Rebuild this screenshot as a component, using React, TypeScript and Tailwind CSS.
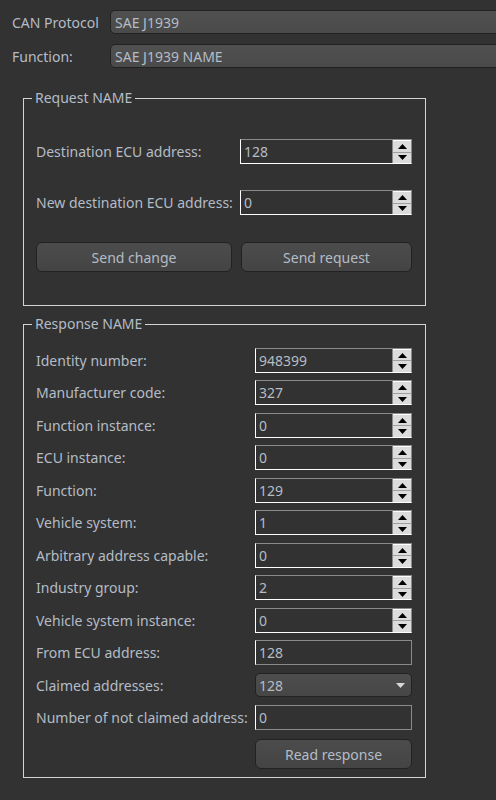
import React from 'react'

const font = { fontFamily: '"Segoe UI", "Noto Sans", "Open Sans", sans-serif' }

const SpinButtons = () => (
    <div className="flex flex-col w-[19px] h-full shrink-0 border-l border-[#8a8a8a] bg-[#dcdcdc]">
        <div className="flex-1 flex items-center justify-center border-b border-[#a0a0a0] border-t border-t-white">
            <svg width="9" height="5" viewBox="0 0 9 5"><path d="M0 5 L4.5 0 L9 5 Z" fill="#000" /></svg>
        </div>
        <div className="flex-1 flex items-center justify-center">
            <svg width="9" height="5" viewBox="0 0 9 5"><path d="M0 0 L4.5 5 L9 0 Z" fill="#000" /></svg>
        </div>
    </div>
)

const SpinBox = ({ value, width }: { value: string; width: string }) => (
    <div className={`${width} h-[25px] shrink-0 flex border-t border-r border-[#8a8a8a] border-l border-b border-l-white border-b-white bg-[#323232]`}>
        <div className="flex-1 flex items-center pl-[3px] text-[14px] text-[#b4bcc6]">{value}</div>
        <SpinButtons />
    </div>
)

const LineEdit = ({ value }: { value: string }) => (
    <div className="w-[157px] h-[25px] shrink-0 flex items-center pl-[3px] border border-[#8a8a8a] border-l-white bg-[#323232] text-[14px] text-[#b4bcc6]">
        {value}
    </div>
)

const Combo = ({ value }: { value: string }) => (
    <div className="w-[157px] h-[24px] shrink-0 flex items-center justify-between pl-[3px] pr-[6px] rounded-[5px] border border-[#222] bg-gradient-to-b from-[#4e4e4e] to-[#464646] text-[14px] text-[#b4bcc6]">
        <span>{value}</span>
        <svg width="9" height="5" viewBox="0 0 9 5"><path d="M0 0 L9 0 L4.5 5 Z" fill="#d8d8d8" /></svg>
    </div>
)

const Button = ({ label, width }: { label: string; width: string }) => (
    <div className={`${width} h-[30px] shrink-0 flex items-center justify-center rounded-[6px] border border-[#222] bg-gradient-to-b from-[#4c4c4c] to-[#444] text-[14px] text-[#b4bcc6]`}>
        {label}
    </div>
)

const GroupBox = ({ title, className, children }: { title: string; className: string; children: React.ReactNode }) => (
    <div className={`relative ml-[23px] w-[403px] border border-[#d4d4d4] ${className}`}>
        <div className="absolute -top-[10px] left-[8px] px-[3px] bg-[#323232] text-[14px] leading-[18px] text-[#b4bcc6]">{title}</div>
        {children}
    </div>
)

const responseRows: { label: string; value: string; kind: 'spin' | 'line' | 'combo' }[] = [
    { label: 'Identity number:', value: '948399', kind: 'spin' },
    { label: 'Manufacturer code:', value: '327', kind: 'spin' },
    { label: 'Function instance:', value: '0', kind: 'spin' },
    { label: 'ECU instance:', value: '0', kind: 'spin' },
    { label: 'Function:', value: '129', kind: 'spin' },
    { label: 'Vehicle system:', value: '1', kind: 'spin' },
    { label: 'Arbitrary address capable:', value: '0', kind: 'spin' },
    { label: 'Industry group:', value: '2', kind: 'spin' },
    { label: 'Vehicle system instance:', value: '0', kind: 'spin' },
    { label: 'From ECU address:', value: '128', kind: 'line' },
    { label: 'Claimed addresses:', value: '128', kind: 'combo' },
    { label: 'Number of not claimed address:', value: '0', kind: 'line' },
]

export default function App() {
    return (
        <div className="w-[496px] h-[800px] overflow-hidden bg-[#323232] text-[#b4bcc6]" style={font}>
            <div className="flex flex-col gap-[10px] pt-[10px]">
                <div className="flex items-center">
                    <div className="w-[110px] shrink-0 pl-[12px] text-[14px]">CAN Protocol</div>
                    <div className="w-[420px] h-[24px] shrink-0 flex items-center pl-[4px] rounded-[5px] border border-[#222] bg-gradient-to-b from-[#505050] to-[#4a4a4a] text-[14px]">SAE J1939</div>
                </div>
                <div className="flex items-center">
                    <div className="w-[110px] shrink-0 pl-[12px] text-[14px]">Function:</div>
                    <div className="w-[420px] h-[24px] shrink-0 flex items-center pl-[4px] rounded-[5px] border border-[#222] bg-gradient-to-b from-[#505050] to-[#4a4a4a] text-[14px]">SAE J1939 NAME</div>
                </div>
            </div>

            <GroupBox title="Request NAME" className="mt-[30px] h-[208px]">
                <div className="flex flex-col pl-[12px] pt-[40px]">
                    <div className="flex items-center h-[25px]">
                        <div className="w-[204px] shrink-0 text-[14px]">Destination ECU address:</div>
                        <SpinBox value="128" width="w-[172px]" />
                    </div>
                    <div className="flex items-center h-[25px] mt-[26px]">
                        <div className="w-[204px] shrink-0 text-[14px]">New destination ECU address:</div>
                        <SpinBox value="0" width="w-[172px]" />
                    </div>
                    <div className="flex gap-[9px] mt-[27px]">
                        <Button label="Send change" width="w-[196px]" />
                        <Button label="Send request" width="w-[171px]" />
                    </div>
                </div>
            </GroupBox>

            <GroupBox title="Response NAME" className="mt-[18px] h-[454px]">
                <div className="flex flex-col pl-[12px] pt-[19px]">
                    {responseRows.map((row) => (
                        <div key={row.label} className="flex items-center h-[32.5px]">
                            <div className="w-[219px] shrink-0 text-[14px] whitespace-nowrap">{row.label}</div>
                            {row.kind === 'spin' && <SpinBox value={row.value} width="w-[157px]" />}
                            {row.kind === 'line' && <LineEdit value={row.value} />}
                            {row.kind === 'combo' && <Combo value={row.value} />}
                        </div>
                    ))}
                    <div className="flex mt-[5px] pl-[219px]">
                        <Button label="Read response" width="w-[157px]" />
                    </div>
                </div>
            </GroupBox>
        </div>
    )
}
